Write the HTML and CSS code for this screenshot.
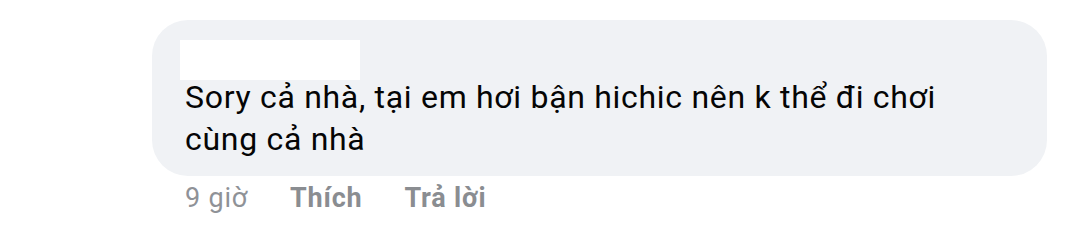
FILE: index.html
```html
<!DOCTYPE html>
<html lang="vi">
<head>
    <meta charset="UTF-8">
    <meta name="viewport" content="width=device-width, initial-scale=1.0">
    <title>Bình luận</title>
    <link rel="stylesheet" href="styles.css">
</head>
<body>
    <div class="comment">
        <div class="bubble">
            <!-- name is hidden -->
            <div class="name-box"></div>
            <p class="comment-text">Sory cả nhà, tại em hơi bận hichic nên k thể đi chơi cùng cả nhà</p>
        </div>
        <div class="actions">
            <span class="time">9 giờ</span>
            <span class="action">Thích</span>
            <span class="action">Trả lời</span>
        </div>
    </div>
</body>
</html>
```

FILE: styles.css
```css
body{
    margin: 0;
    background-color: white;
    font-family: Roboto, "Noto Sans", sans-serif;
    color: #050505;
}
.comment{
    padding-top: 20px;
    padding-left: 152px;
}
.bubble{
    box-sizing: border-box;
    width: 895px;
    background-color: #f0f2f5;
    border-radius: 36px;
    padding: 20px 40px 16px 33px;
}
.name-box{
    width: 180px;
    height: 40px;
    margin-left: -5px;
    background-color: white;
}
.comment-text{
    margin: -4px 0 0 0;
    font-size: 32px;
    letter-spacing: 0.7px;
    line-height: 42px;
}
.actions{
    display: flex;
    align-items: baseline;
    gap: 42px;
    padding-left: 33px;
    margin-top: 4px;
    font-size: 27px;
    letter-spacing: 0.8px;
    line-height: 36px;
}
.time{
    color: #8f9297;
}
.action{
    color: #8a8d91;
    font-weight: bold;
}
```
